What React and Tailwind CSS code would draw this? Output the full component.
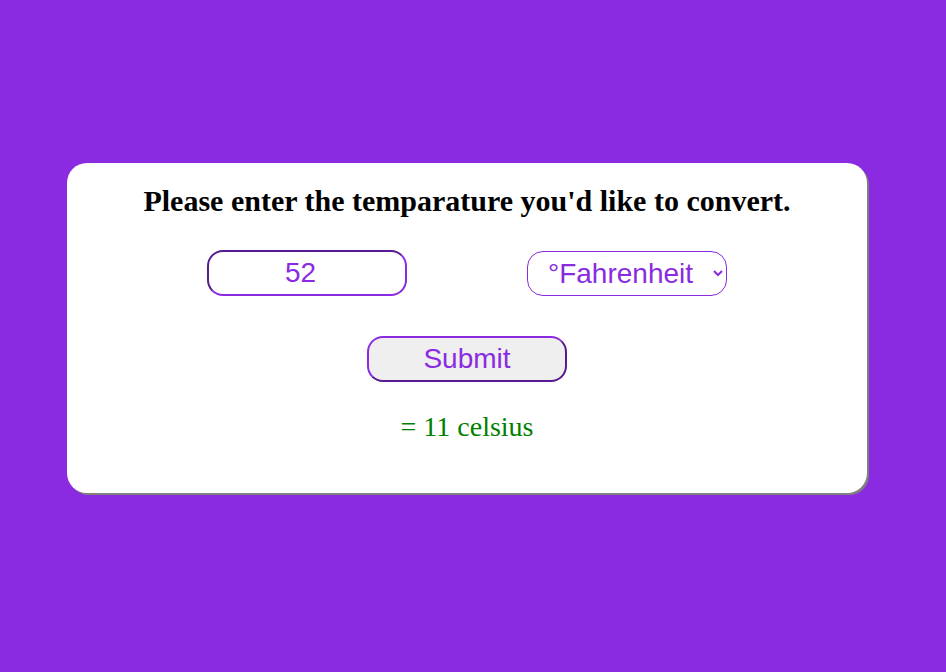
import React, { useState } from 'react';

export default function App() {
  const [temp, setTemp] = useState('52');
  const [unit, setUnit] = useState('fahrenheit');
  const [result, setResult] = useState('11 celsius');

  // Convert between the two units
  function handleSubmit(e) {
    e.preventDefault();
    const n = parseFloat(temp);
    if (isNaN(n)) return;
    if (unit === 'fahrenheit') {
      setResult(`${Math.round(((n - 32) * 5) / 9)} celsius`);
    } else {
      setResult(`${Math.round((n * 9) / 5 + 32)} fahrenheit`);
    }
  }

  return (
    <div className="min-h-screen bg-[#8a2be2] pt-[163px] pl-[67px]">
      <form
        onSubmit={handleSubmit}
        className="w-[800px] h-[330px] bg-white rounded-[20px] shadow-[2px_2px_0_#808080] flex flex-col items-center pt-[18px] font-['Liberation_Serif',serif]"
      >
        <h1 className="text-[30px] font-bold text-black leading-[40px]">
          Please enter the temparature you'd like to convert.
        </h1>
        <div className="flex gap-[120px] mt-[29px]">
          <input
            type="text"
            value={temp}
            onChange={e => setTemp(e.target.value)}
            className="w-[200px] h-[46px] rounded-[16px] border-2 border-[#8a2be2] [border-style:inset] bg-white text-center pr-[13px] text-[28px] text-[#8a2be2] font-['Liberation_Sans',sans-serif] outline-none"
          />
          <select
            value={unit}
            onChange={e => setUnit(e.target.value)}
            className="w-[200px] h-[45px] mt-[1px] rounded-[16px] border border-[#8a2be2] bg-white text-[28px] text-[#8a2be2] font-['Liberation_Sans',sans-serif] pl-[16px] pr-[6px] outline-none [appearance:auto]"
          >
            <option value="fahrenheit">°Fahrenheit</option>
            <option value="celsius">°Celsius</option>
          </select>
        </div>
        <button
          type="submit"
          className="w-[200px] h-[46px] mt-[40px] rounded-[16px] border-2 border-[#8a2be2] [border-style:outset] bg-[#efefef] text-[28px] text-[#8a2be2] font-['Liberation_Sans',sans-serif]"
        >
          Submit
        </button>
        <p className="mt-[30px] text-[28px] leading-[30px] text-[#008000]">= {result}</p>
      </form>
    </div>
  );
}
